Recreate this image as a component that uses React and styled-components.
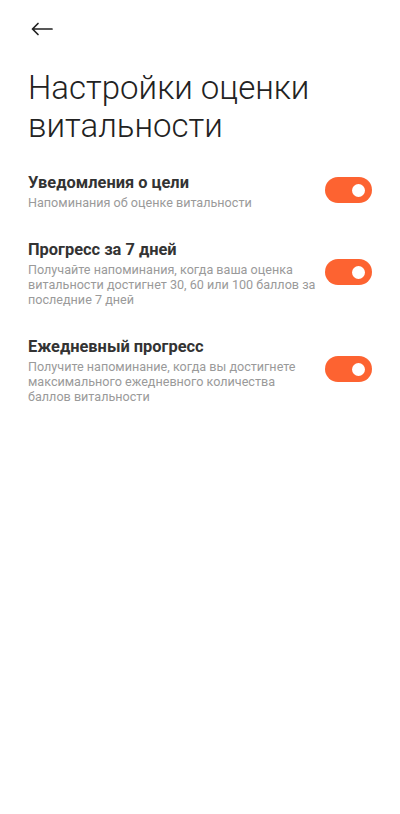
import React, { useState } from "react";
import styled, { createGlobalStyle } from "styled-components";

const GlobalStyles = createGlobalStyle`
  html, body {
    margin: 0;
    padding: 0;
    background: #ffffff;
    font-family: Roboto, "Noto Sans", sans-serif;
  }
`;

const Page = styled.div`
  width: 400px;
  min-height: 814px;
  background: #ffffff;
  box-sizing: border-box;
  padding: 0 28px;
`;

const TopBar = styled.div`
  height: 58px;
  display: flex;
  align-items: center;
`;

const BackButton = styled.button`
  background: transparent;
  border: none;
  padding: 0;
  margin-left: 2px;
  width: 24px;
  height: 24px;
  display: flex;
  align-items: center;
  justify-content: center;
  cursor: pointer;
`;

const Title = styled.h1`
  margin: 11px 0 0;
  font-size: 33px;
  line-height: 38px;
  font-weight: 300;
  color: #222222;
  letter-spacing: 0;
`;

const List = styled.div`
  display: flex;
  flex-direction: column;
  gap: 30px;
  margin-top: 28px;
`;

const Row = styled.div`
  display: flex;
  align-items: center;
  justify-content: space-between;
  gap: 6px;
`;

const TextCol = styled.div`
  display: flex;
  flex-direction: column;
  gap: 2px;
  max-width: 296px;
`;

const ItemTitle = styled.div`
  font-size: 16.4px;
  line-height: 20px;
  font-weight: 700;
  color: #333333;
`;

const ItemSub = styled.div`
  font-size: 12.6px;
  line-height: 15px;
  color: #9a9a9a;
`;

const Toggle = styled.button`
  flex: none;
  width: 47px;
  height: 26px;
  margin-bottom: 3px;
  border-radius: 13px;
  border: none;
  padding: 0;
  position: relative;
  background: ${(p) => (p.$on ? "#fd6331" : "#d9d9d9")};
  cursor: pointer;

  &::after {
    content: "";
    position: absolute;
    top: 6.5px;
    left: ${(p) => (p.$on ? "27px" : "7px")};
    width: 13px;
    height: 13px;
    border-radius: 50%;
    background: #ffffff;
  }
`;

const items = [
  {
    title: "Уведомления о цели",
    sub: "Напоминания об оценке витальности",
  },
  {
    title: "Прогресс за 7 дней",
    sub: "Получайте напоминания, когда ваша оценка витальности достигнет 30, 60 или 100 баллов за последние 7 дней",
  },
  {
    title: "Ежедневный прогресс",
    sub: "Получите напоминание, когда вы достигнете максимального ежедневного количества баллов витальности",
  },
];

export default function App() {
  const [state, setState] = useState([true, true, true]);

  const flip = (i) => setState((s) => s.map((v, j) => (j === i ? !v : v)));

  return (
    <>
      <GlobalStyles />
      <Page>
        <TopBar>
          <BackButton aria-label="Назад">
            <svg width="22" height="14" viewBox="0 0 22 14" fill="none">
              <path
                d="M21 7H1.5M7 1.5L1.5 7L7 12.5"
                stroke="#222"
                strokeWidth="1.7"
                strokeLinecap="round"
                strokeLinejoin="round"
              />
            </svg>
          </BackButton>
        </TopBar>
        <Title>Настройки оценки витальности</Title>
        <List>
          {items.map((it, i) => (
            <Row key={i}>
              <TextCol>
                <ItemTitle>{it.title}</ItemTitle>
                <ItemSub>{it.sub}</ItemSub>
              </TextCol>
              <Toggle $on={state[i]} onClick={() => flip(i)} />
            </Row>
          ))}
        </List>
      </Page>
    </>
  );
}
